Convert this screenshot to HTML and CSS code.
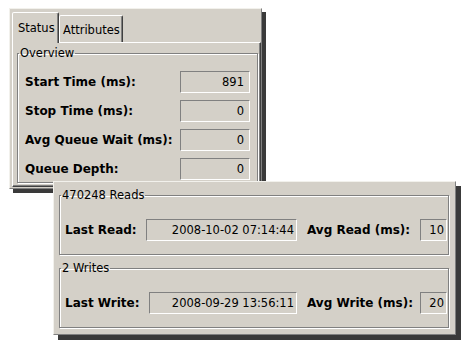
FILE: index.html
```html
<!DOCTYPE html>
<html>
<head>
<meta charset="utf-8">
<title>Stats</title>
<link rel="stylesheet" href="styles.css">
</head>
<body>
<div class="win win1">
  <div class="tabs">
    <div class="tab tab-sel">Status</div>
    <div class="tab tab-attr">Attributes</div>
  </div>
  <div class="pane">
    <fieldset class="group overview">
      <legend>Overview</legend>
      <div class="rows">
        <div class="row"><span class="lbl">Start Time (ms):</span><span class="field f-num">891</span></div>
        <div class="row"><span class="lbl">Stop Time (ms):</span><span class="field f-num">0</span></div>
        <div class="row"><span class="lbl">Avg Queue Wait (ms):</span><span class="field f-num">0</span></div>
        <div class="row"><span class="lbl">Queue Depth:</span><span class="field f-num">0</span></div>
      </div>
    </fieldset>
  </div>
</div>

<div class="win win2">
  <fieldset class="group io io-reads">
    <legend>470248 Reads</legend>
    <div class="iorow reads">
      <span class="lbl">Last Read:</span>
      <span class="field">2008-10-02 07:14:44</span>
      <span class="lbl lbl2">Avg Read (ms):</span>
      <span class="field">10</span>
    </div>
  </fieldset>
  <fieldset class="group io io-writes">
    <legend>2 Writes</legend>
    <div class="iorow writes">
      <span class="lbl">Last Write:</span>
      <span class="field">2008-09-29 13:56:11</span>
      <span class="lbl lbl2">Avg Write (ms):</span>
      <span class="field">20</span>
    </div>
  </fieldset>
</div>
</body>
</html>
```

FILE: styles.css
```css
html, body {
  margin: 0;
  padding: 0;
  background: #ffffff;
}

body {
  font-family: "DejaVu Sans", "Liberation Sans", sans-serif;
  font-size: 11.5px;
  line-height: 13px;
  color: #000;
}

.win {
  position: absolute;
  box-sizing: border-box;
  background: #d4d0c8;
  border: 1px solid;
  border-color: #f2f1ec #808080 #808080 #f2f1ec;
}

.win1 {
  left: 9px;
  top: 8px;
  width: 253px;
  height: 181px;
  padding: 3px 0 1px 2px;
  box-shadow: 4px 4px 0 #3a3a3a;
  display: flex;
  flex-direction: column;
  overflow: hidden;
}

.tabs {
  display: flex;
  align-items: flex-end;
  height: 30px;
  flex: none;
  position: relative;
  z-index: 1;
}

.tab {
  box-sizing: border-box;
  height: 27px;
  display: flex;
  align-items: center;
  background: #d4d0c8;
  border: 1px solid;
  border-bottom: none;
  border-color: #ffffff #404040 transparent #ffffff;
  box-shadow: inset -1px 0 0 #808080;
  border-radius: 2px 2px 0 0;
  white-space: nowrap;
}

.tab-sel {
  height: 31px;
  width: 47px;
  margin-bottom: -1px;
  padding-left: 5px;
  padding-top: 1px;
}

.tab-attr {
  width: 64px;
  padding-left: 3px;
  padding-top: 3px;
}

.pane {
  flex: 1;
  min-height: 0;
  overflow: hidden;
  box-sizing: border-box;
  border: 1px solid;
  border-color: #ffffff #404040 #404040 #ffffff;
  box-shadow: inset -1px -1px 0 #808080;
  padding: 4px 2px 0 4px;
}

.group {
  margin: 0;
  padding: 0;
  min-width: 0;
  border: 1px solid #808080;
  box-shadow: inset 1px 1px 0 #ffffff, 1px 1px 0 #ffffff;
}

.group legend {
  padding: 0 1px;
  margin-left: 1px;
  line-height: 13px;
}

.rows {
  display: flex;
  flex-direction: column;
  gap: 7px;
  padding: 11px 7px 2px 7px;
}

.row {
  display: flex;
  align-items: center;
  height: 22px;
}

.lbl {
  font-weight: bold;
  font-size: 12px;
  white-space: nowrap;
}

.row .lbl {
  flex: 1;
}

.field {
  box-sizing: border-box;
  height: 22px;
  display: flex;
  align-items: center;
  justify-content: flex-end;
  padding-right: 2px;
  border: 1px solid;
  border-color: #808080 #ffffff #ffffff #808080;
  white-space: nowrap;
}

.f-num {
  width: 70px;
  padding-right: 5px;
}

.win2 {
  left: 53px;
  top: 181px;
  width: 403px;
  height: 154px;
  padding: 7px 6px 0 5px;
  box-shadow: 5px 5px 0 #3a3a3a;
}

.io-reads {
  margin-bottom: 7px;
}

.iorow {
  display: grid;
  align-items: center;
  padding: 17px 1px 13px 5px;
}

.reads {
  grid-template-columns: 81px 1fr 123px 27px;
}

.writes {
  grid-template-columns: 84px 1fr 123px 27px;
}

.lbl2 {
  padding-left: 10px;
}
```
